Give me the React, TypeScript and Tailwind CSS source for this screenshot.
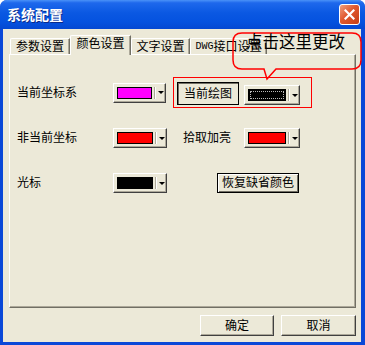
import React from "react";

const cjk = "font-['Liberation_Sans','Noto_Sans_CJK_SC',sans-serif]";

const raised =
  "border border-t-white border-l-white border-r-[#404040] border-b-[#404040] shadow-[inset_-1px_-1px_#ACA899] bg-[#ECE9D8]";

type PickProps = { color: string; className: string; focus?: boolean };

const ColorPick = ({ color, className, focus }: PickProps) => (
  <div className={`flex h-[20px] pl-[3px] py-[3px] ${raised} ${className}`}>
    <div className="flex-1 border border-black p-px" style={{ backgroundColor: color }}>
      {focus && <div className="h-full w-full border border-dotted border-[#BBBBBB]" />}
    </div>
    <div className="ml-[2px] w-px bg-[#ACA899]" />
    <div className="w-px bg-white" />
    <div className="flex w-[9px] items-center justify-center">
      <div className="h-0 w-0 border-x-[3px] border-t-[3px] border-x-transparent border-t-black" />
    </div>
  </div>
);

const Tab = ({ children, w, active }: { children: React.ReactNode; w: string; active?: boolean }) => (
  <div
    className={`flex items-center justify-center whitespace-nowrap rounded-tl-[2px] border-l border-t border-r border-l-white border-t-white border-r-[#716F64] shadow-[inset_-1px_0_#ACA899] bg-[#ECE9D8] text-[12px] leading-[12px] text-black ${w} ${
      active ? "relative z-10 -mb-px h-[20px] pb-[3px]" : "h-[16px]"
    }`}
  >
    {children}
  </div>
);

export default function App() {
  return (
    <div className={`flex h-[345px] w-[365px] flex-col overflow-hidden rounded-t-[7px] bg-[#0A48D8] ${cjk}`}>
      {/* title bar */}
      <div className="flex h-[29px] items-center justify-between bg-[linear-gradient(180deg,#4A92F8_0%,#1E68EC_10%,#0A58E2_45%,#0552DF_75%,#0448D2_100%)] pl-[7px] pr-[5px]">
        <span className="text-[14px] font-bold leading-[14px] text-white [text-shadow:1px_1px_#0A2A8A]">
          系统配置
        </span>
        <div className="flex h-[21px] w-[21px] items-center justify-center rounded-[3px] border border-white bg-[linear-gradient(135deg,#F0A080_0%,#E0582E_45%,#C53D16_100%)]">
          <svg width="11" height="11" viewBox="0 0 11 11">
            <path d="M1.5 1.5 L9.5 9.5 M9.5 1.5 L1.5 9.5" stroke="white" strokeWidth="2.2" strokeLinecap="square" />
          </svg>
        </div>
      </div>

      {/* body */}
      <div className="relative mb-[3px] ml-[3px] mr-[4px] flex flex-1 flex-col bg-[#ECE9D8] pt-[6px]">
        <div className="ml-[7px] flex items-end">
          <Tab w="w-[60px]">参数设置</Tab>
          <Tab w="w-[61px]" active>颜色设置</Tab>
          <Tab w="w-[59px]">文字设置</Tab>
          <Tab w="w-[77px]">
            <span className="font-['Liberation_Mono',monospace] text-[10px]">DWG</span>接口设置
          </Tab>
        </div>

        <div className="ml-[6px] h-[254px] w-[347px] border border-t-white border-l-white border-r-[#716F64] border-b-[#716F64] shadow-[inset_-1px_-1px_#ACA899] pl-[7px] pt-[22px] text-[12px] leading-[12px] text-black">
          <div className="flex h-[31px] items-center">
            <span className="w-[96px]">当前坐标系</span>
            <ColorPick color="#FF00FF" className="w-[53px]" />
            <div className="ml-[7px] flex h-[31px] w-[139px] items-end border border-[#FF0000] pb-[2px] pl-[3px]">
              <div className="flex h-[23px] w-[62px] items-center justify-center border border-black shadow-[inset_1px_1px_#716F64]">
                当前绘图
              </div>
              <ColorPick color="#000000" className="ml-[5px] w-[56px]" focus />
            </div>
          </div>

          <div className="mt-[20px] flex h-[20px] items-center">
            <span className="w-[96px]">非当前坐标</span>
            <ColorPick color="#FF0000" className="w-[54px]" />
            <span className="ml-[16px] w-[48px]">拾取加亮</span>
            <ColorPick color="#FF0000" className="ml-[13px] w-[56px]" />
          </div>

          <div className="mt-[25px] flex h-[20px] items-center">
            <span className="w-[96px]">光标</span>
            <ColorPick color="#000000" className="w-[54px]" />
            <div className="ml-[50px] flex h-[20px] w-[82px] items-center justify-center border border-black shadow-[inset_1px_1px_white,inset_-1px_-1px_#716F64] bg-[#ECE9D8]">
              恢复缺省颜色
            </div>
          </div>
        </div>

        <div className="mt-[7px] flex justify-end gap-[7px] pr-[5px] text-[12px] leading-[12px] text-black">
          <div className={`flex h-[21px] w-[74px] items-center justify-center ${raised}`}>确定</div>
          <div className={`flex h-[21px] w-[75px] items-center justify-center ${raised}`}>取消</div>
        </div>

        {/* callout */}
        <svg className="absolute left-[229px] top-[3px] z-20" width="134" height="50" viewBox="0 0 134 50">
          <path
            d="M10 1 H120 Q129 1 129 10 V28 Q129 37 120 37 H44 L35 47 L32 37 H10 Q1 37 1 28 V10 Q1 1 10 1 Z"
            fill="none"
            stroke="#FF0000"
            strokeWidth="1.5"
          />
        </svg>
        <div className="absolute left-[243px] top-[4px] z-20 text-[16.5px] leading-[18px] text-black">
          点击这里更改
        </div>
      </div>
    </div>
  );
}
